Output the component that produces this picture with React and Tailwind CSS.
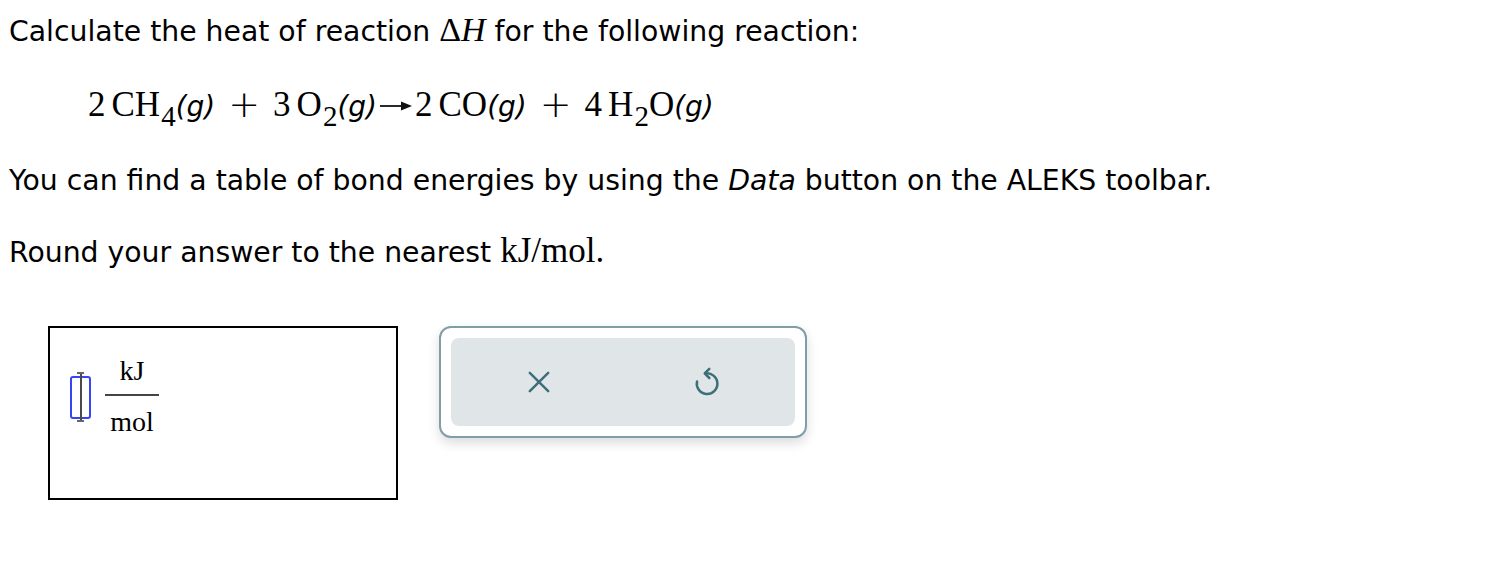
const sans = { fontFamily: "'DejaVu Sans', Verdana, sans-serif" };

const Phase = () => (
  <i className="font-['DejaVu_Sans'] text-[28px]">(g)</i>
);

const Sub = ({ children }) => (
  <span className="inline-block text-[29px] relative top-[10px] ml-[1px]">{children}</span>
);

const Plus = () => (
  <span className="inline-block mx-[13px] text-[38px] leading-[40px] relative top-[1px] font-['DejaVu_Sans'] font-extralight">+</span>
);

const Arrow = () => (
  <svg className="inline-block mx-[2px] align-middle relative top-[-2px]" width="34" height="12" viewBox="0 0 34 12">
    <line x1="1" y1="6" x2="24" y2="6" stroke="#111" strokeWidth="1.8" />
    <path d="M22 1.5 L33 6 L22 10.5 Z" fill="#111" />
  </svg>
);

const App = () => {
  return (
    <div className="w-[1486px] h-[578px] bg-white text-black" style={sans}>
      <div className="pl-[9px] pt-[12px]">
        <p className="text-[28.3px] leading-[36px]">
          Calculate the heat of reaction{" "}
          <span className="font-['Liberation_Serif'] text-[34px]">
            Δ<i>H</i>
          </span>{" "}
          for the following reaction:
        </p>

        <div className="pl-[79px] pt-[33px] h-[76px] text-[35px] leading-[40px] font-['Liberation_Serif'] whitespace-nowrap">
          2<span className="ml-[6px]">CH</span>
          <Sub>4</Sub>
          <Phase />
          <Plus />3<span className="ml-[6px]">O</span>
          <Sub>2</Sub>
          <Phase />
          <Arrow />2<span className="ml-[6px]">CO</span>
          <Phase />
          <Plus />4<span className="ml-[6px]">H</span>
          <Sub>2</Sub>O
          <Phase />
        </div>

        <p className="pt-[37px] text-[28.3px] leading-[36px]">
          You can find a table of bond energies by using the <i>Data</i> button on the ALEKS toolbar.
        </p>
        <p className="pt-[34px] text-[28.3px] leading-[36px]">
          Round your answer to the nearest{" "}
          <span className="font-['Liberation_Serif'] text-[35px]">kJ/mol.</span>
        </p>
      </div>

      <div className="flex items-start gap-[41px] pl-[48px] pt-[55px]">
        <div className="w-[350px] h-[174px] border-2 border-black flex items-start pl-[20px] pt-[28px]">
          <div className="flex items-center gap-[14px] font-['Liberation_Serif'] text-[28px]">
            <div className="relative w-[21px] h-[50px] flex justify-center">
              <div className="absolute top-[4px] w-[21px] h-[43px] border-2 border-[#3646f7] rounded-[3px]" />
              <div className="w-[2px] h-[50px] bg-[#4a4a4a] relative" />
              <div className="absolute top-0 w-[7px] h-[2px] bg-[#666]" />
              <div className="absolute bottom-0 w-[7px] h-[2px] bg-[#666]" />
            </div>
            <div className="flex flex-col items-center">
              <span className="leading-[30px]">kJ</span>
              <div className="w-[54px] h-[2px] bg-[#444] mt-[8px] mb-[11px]" />
              <span className="leading-[30px]">mol</span>
            </div>
          </div>
        </div>

        <div className="w-[368px] h-[112px] rounded-[12px] border-2 border-[#7f9ea6] bg-white p-[10px] shadow-[0_5px_12px_rgba(0,0,0,0.14)]">
          <div className="h-full rounded-[8px] bg-[#e0e6e8] flex items-center justify-center gap-[128px]">
            <button className="w-[40px] h-[40px] flex items-center justify-center">
              <svg width="26" height="26" viewBox="0 0 24 24" fill="none" stroke="#3d6e7a" strokeWidth="2.3" strokeLinecap="round">
                <path d="M3.5 3.5 L20.5 20.5 M20.5 3.5 L3.5 20.5" />
              </svg>
            </button>
            <button className="w-[40px] h-[40px] flex items-center justify-center">
              <svg width="28" height="32" viewBox="0 0 24 28" fill="none" stroke="#3d6e7a" strokeWidth="2.2" strokeLinecap="round" strokeLinejoin="round">
                <path d="M14 2.5 L10 6.5 L14 10.5" />
                <path d="M10.5 6.6 A9 9 0 1 1 3.3 13.5" />
              </svg>
            </button>
          </div>
        </div>
      </div>
    </div>
  );
};

export default App;
